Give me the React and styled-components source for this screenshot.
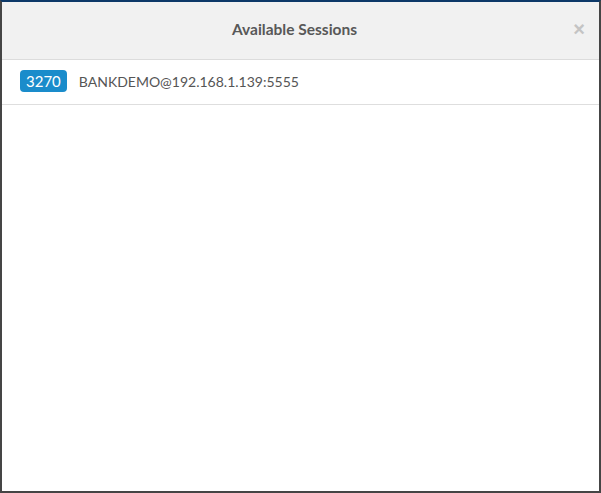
import React from "react";
import styled, { createGlobalStyle } from "styled-components";

const GlobalStyle = createGlobalStyle`
  html, body {
    margin: 0;
    padding: 0;
    background: #3a3a3a;
  }
  * {
    box-sizing: border-box;
  }
`;

const Frame = styled.div`
  width: 601px;
  height: 493px;
  border: 2px solid #454545;
  border-top-color: #0c3868;
  background: #ffffff;
  display: flex;
  flex-direction: column;
  font-family: Lato, "Open Sans", sans-serif;
`;

const Header = styled.div`
  position: relative;
  height: 58px;
  flex-shrink: 0;
  background: #f1f1f1;
  border-bottom: 1px solid #dcdcdc;
  display: flex;
  align-items: center;
  justify-content: center;
  padding: 0 12px 3px 0;
`;

const Title = styled.h4`
  margin: 0;
  font-size: 15.5px;
  font-weight: 700;
  color: #585858;
`;

const Close = styled.button`
  position: absolute;
  right: 14px;
  top: 17px;
  border: none;
  background: none;
  padding: 0;
  font-family: "Liberation Sans", Arial, sans-serif;
  font-size: 20px;
  font-weight: 700;
  line-height: 1;
  color: #c4c4c4;
  cursor: pointer;
`;

const List = styled.ul`
  list-style: none;
  margin: 0;
  padding: 0;
`;

const Row = styled.li`
  height: 45px;
  display: flex;
  align-items: center;
  gap: 12px;
  padding: 0 18px 2px;
  border-bottom: 1px solid #dedede;
`;

const Badge = styled.span`
  display: inline-flex;
  align-items: center;
  justify-content: center;
  height: 22px;
  min-width: 46px;
  padding: 0 6px;
  border-radius: 4px;
  background: #1a8ccb;
  color: #ffffff;
  font-size: 15px;
`;

const Host = styled.span`
  font-size: 14px;
  color: #555555;
`;

const sessions = [{ type: "3270", host: "BANKDEMO@192.168.1.139:5555" }];

export default function App() {
  return (
    <>
      <GlobalStyle />
      <Frame>
        <Header>
          <Title>Available Sessions</Title>
          <Close aria-label="Close">×</Close>
        </Header>
        <List>
          {sessions.map((s) => (
            <Row key={s.host}>
              <Badge>{s.type}</Badge>
              <Host>{s.host}</Host>
            </Row>
          ))}
        </List>
      </Frame>
    </>
  );
}
